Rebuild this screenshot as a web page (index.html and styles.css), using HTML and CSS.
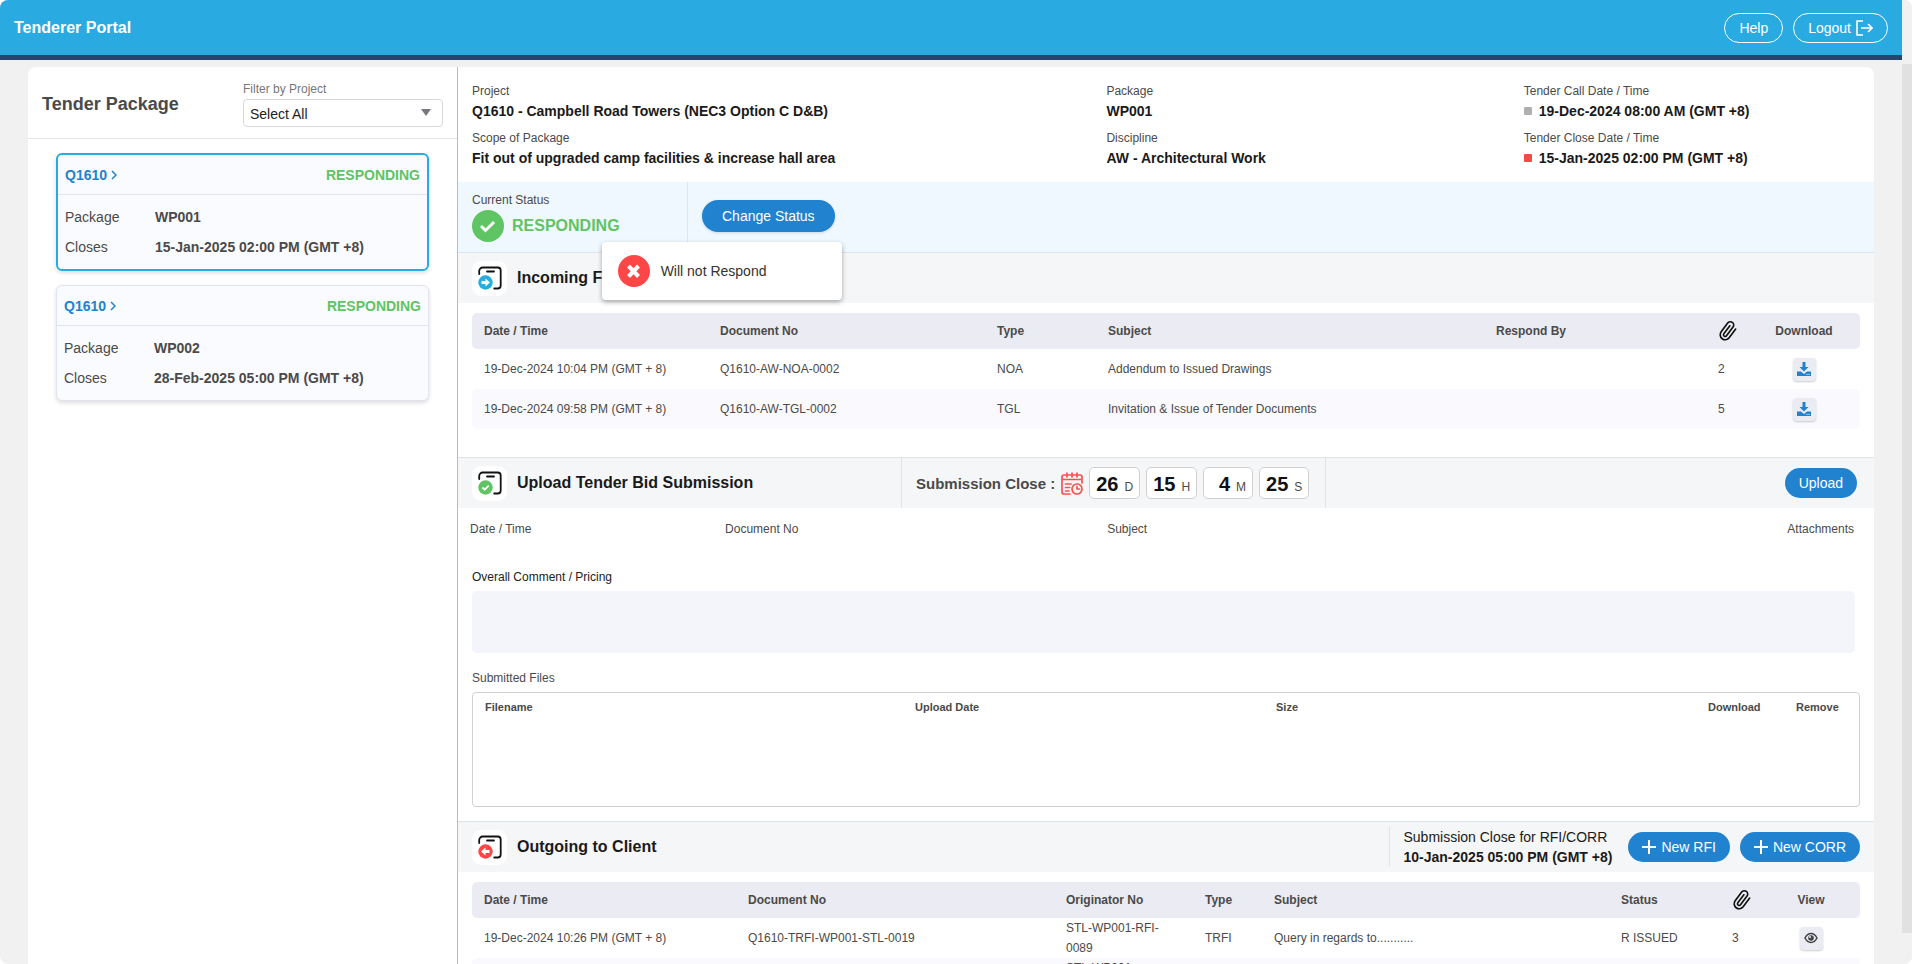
FILE: index.html
```html
<!DOCTYPE html>
<html lang="en">
<head>
<meta charset="utf-8">
<title>Tenderer Portal</title>
<link rel="stylesheet" href="styles.css">
</head>
<body>
<svg class="defs" aria-hidden="true">
  <symbol id="clip" viewBox="0 0 24 24"><path d="M21.440 11.050l-9.190 9.190a6 6 0 0 1-8.490-8.490l9.190-9.190a4 4 0 0 1 5.660 5.660l-9.200 9.190a2 2 0 0 1-2.830-2.830l8.490-8.480" fill="none" stroke="#111" stroke-width="2" stroke-linecap="round" transform="rotate(-8 12 12)"/></symbol>
  <symbol id="download" viewBox="0 0 14 14"><path d="M5.500 0h3v5h3L7 9.500 2.500 5h3zM0 9.500h4L7 12l3-2.500h4V14H0z" fill="#2182cf"/><path d="M9.500 12.500h1m1 0h1" stroke="#fff" stroke-width="1"/></symbol>
  <symbol id="chevron" viewBox="0 0 6 10"><path d="M1 1l4 4-4 4" fill="none" stroke="#2182cf" stroke-width="1.500"/></symbol>
  <symbol id="plus" viewBox="0 0 14 14"><path d="M7 0v14M0 7h14" stroke="#fff" stroke-width="2"/></symbol>
  <symbol id="sheet" viewBox="0 0 24 24"><path d="M1.200 8V5a3.500 3.500 0 0 1 3.500-3.500h15A3 3 0 0 1 22.700 4.500v15a3 3 0 0 1-3 3h-3.500M9 5.500h7" fill="none" stroke="#111" stroke-width="1.800" stroke-linecap="round"/></symbol>
  <symbol id="eye" viewBox="0 0 14 12"><path d="M1 6c3-6 9-6 12 0-3 6-9 6-12 0z" fill="none" stroke="#444" stroke-width="1.500"/><circle cx="7" cy="6" r="2.800" fill="#444"/><circle cx="6" cy="5" r="1" fill="#eaebf3"/></symbol>
</svg>
<div class="page">
  <div class="app">
    <header class="topbar">
      <h1 class="brand">Tenderer Portal</h1>
      <nav class="topnav">
        <button class="outline">Help</button>
        <button class="outline">Logout
          <svg width="17" height="16" viewBox="0 0 17 16"><path d="M7 1H1v14h6M5 8h10M12 4l4 4-4 4" fill="none" stroke="#fff" stroke-width="1.600"/></svg>
        </button>
      </nav>
    </header>
    <div class="workspace">
      <aside class="sidebar">
        <div class="side-head">
          <h2 class="side-title">Tender Package</h2>
          <div class="filter">
            <label for="project">Filter by Project</label>
            <select id="project"><option>Select All</option></select>
          </div>
        </div>
        <div class="packages">
          <article class="package selected">
            <div class="package-head"><a href="#">Q1610 <svg width="6" height="10"><use href="#chevron"/></svg></a><strong>RESPONDING</strong></div>
            <dl><dt>Package</dt><dd>WP001</dd><dt>Closes</dt><dd>15-Jan-2025 02:00 PM (GMT +8)</dd></dl>
          </article>
          <article class="package">
            <div class="package-head"><a href="#">Q1610 <svg width="6" height="10"><use href="#chevron"/></svg></a><strong>RESPONDING</strong></div>
            <dl><dt>Package</dt><dd>WP002</dd><dt>Closes</dt><dd>28-Feb-2025 05:00 PM (GMT +8)</dd></dl>
          </article>
        </div>
      </aside>
      <main class="content">
        <dl class="summary">
          <div><dt>Project</dt><dd>Q1610 - Campbell Road Towers (NEC3 Option C D&amp;B)</dd></div>
          <div><dt>Package</dt><dd>WP001</dd></div>
          <div><dt>Tender Call Date / Time</dt><dd><i class="dot"></i>19-Dec-2024 08:00 AM (GMT +8)</dd></div>
          <div><dt>Scope of Package</dt><dd>Fit out of upgraded camp facilities &amp; increase hall area</dd></div>
          <div><dt>Discipline</dt><dd>AW - Architectural Work</dd></div>
          <div><dt>Tender Close Date / Time</dt><dd><i class="dot red"></i>15-Jan-2025 02:00 PM (GMT +8)</dd></div>
        </dl>
        <section class="status">
          <div class="current">
            <span class="small">Current Status</span>
            <span class="state"><svg width="32" height="32" viewBox="0 0 32 32"><circle cx="16" cy="16" r="16" fill="#5fc463"/><path d="M9 16l4.500 4.500L22 12" fill="none" stroke="#fff" stroke-width="3"/></svg>RESPONDING</span>
          </div>
          <div class="change">
            <button class="primary tall">Change Status</button>
            <button class="menu"><svg width="32" height="32" viewBox="0 0 32 32"><circle cx="16" cy="16" r="16" fill="#ff4646"/><path d="M10.500 11l10 10.500m0-10.500l-10 10.500" stroke="#fff" stroke-width="4"/></svg>Will not Respond</button>
          </div>
        </section>

        <section class="incoming">
          <div class="section-head">
            <span class="tile"><svg width="24" height="24" viewBox="0 0 24 24"><use href="#sheet"/><circle cx="7.500" cy="16.500" r="7.200" fill="#29abe2"/><path d="M3.500 15h4v-2.500l4.500 4-4.500 4V18h-4z" fill="#fff"/></svg></span>
            <h2>Incoming From Client</h2>
          </div>
          <table class="list">
            <colgroup><col class="w-in-date"><col class="w-in-doc"><col class="w-in-type"><col><col class="w-in-respond"><col class="w-clip"><col class="w-in-act"></colgroup>
            <thead><tr><th>Date / Time</th><th>Document No</th><th>Type</th><th>Subject</th><th>Respond By</th><th><svg class="clip" width="20" height="22" role="img" aria-label="Attachments"><use href="#clip"/></svg></th><th class="mid">Download</th></tr></thead>
            <tbody>
              <tr><td>19-Dec-2024 10:04 PM (GMT + 8)</td><td>Q1610-AW-NOA-0002</td><td>NOA</td><td>Addendum to Issued Drawings</td><td></td><td>2</td><td class="mid"><button class="icon" aria-label="Download"><svg width="14" height="14"><use href="#download"/></svg></button></td></tr>
              <tr><td>19-Dec-2024 09:58 PM (GMT + 8)</td><td>Q1610-AW-TGL-0002</td><td>TGL</td><td>Invitation &amp; Issue of Tender Documents</td><td></td><td>5</td><td class="mid"><button class="icon" aria-label="Download"><svg width="14" height="14"><use href="#download"/></svg></button></td></tr>
            </tbody>
          </table>
        </section>

        <section class="upload">
          <div class="section-head ruled">
            <div class="upload-title">
              <span class="tile"><svg width="24" height="24" viewBox="0 0 24 24"><use href="#sheet"/><circle cx="7.500" cy="16.500" r="7.200" fill="#5fc463"/><path d="M4.500 16.500l2.200 2.200 4-4" fill="none" stroke="#fff" stroke-width="1.800"/></svg></span>
              <h2>Upload Tender Bid Submission</h2>
            </div>
            <div class="countdown">
              <strong>Submission Close :</strong>
              <svg width="22" height="23" viewBox="0 0 22 23" fill="none" stroke="#ff4f4f" stroke-width="1.700" stroke-linecap="round"><path d="M9 22H3a2 2 0 0 1-2-2V5a2 2 0 0 1 2-2h16a2 2 0 0 1 2 2v6M1 7.500h20M6 1v4M11 1v4M16 1v4M4.500 12H10M4.500 15.500H8.500M4.500 19H8"/><circle cx="16" cy="17" r="5"/><path d="M16 14.500V17h2.500"/></svg>
              <span class="unit"><b>26</b>D</span><span class="unit"><b>15</b>H</span><span class="unit"><b>4</b>M</span><span class="unit"><b>25</b>S</span>
            </div>
            <button class="primary push">Upload</button>
          </div>
          <div class="bid-head"><span>Date / Time</span><span>Document No</span><span>Subject</span><span>Attachments</span></div>
          <div class="bid-body">
            <label class="dark" for="comment">Overall Comment / Pricing</label>
            <textarea id="comment" readonly></textarea>
            <p>Submitted Files</p>
            <div class="files">
              <table>
                <colgroup><col class="w-f-name"><col class="w-f-date"><col><col class="w-f-down"><col class="w-f-rem"></colgroup>
                <thead><tr><th>Filename</th><th>Upload Date</th><th>Size</th><th>Download</th><th>Remove</th></tr></thead>
              </table>
            </div>
          </div>
        </section>

        <section class="outgoing">
          <div class="section-head ruled">
            <span class="tile"><svg width="24" height="24" viewBox="0 0 24 24"><use href="#sheet"/><circle cx="7.500" cy="16.500" r="7.200" fill="#ff4646"/><path d="M11.500 15h-4v-2.500l-4.500 4 4.500 4V18h4z" fill="#fff"/></svg></span>
            <h2>Outgoing to Client</h2>
            <div class="deadline push"><span>Submission Close for RFI/CORR</span><strong>10-Jan-2025 05:00 PM (GMT +8)</strong></div>
            <div class="actions">
              <button class="primary"><svg width="14" height="14"><use href="#plus"/></svg>New RFI</button>
              <button class="primary"><svg width="14" height="14"><use href="#plus"/></svg>New CORR</button>
            </div>
          </div>
          <table class="list">
            <colgroup><col class="w-out-date"><col class="w-out-doc"><col class="w-out-orig"><col class="w-out-type"><col><col class="w-out-status"><col class="w-clip"><col class="w-out-act"></colgroup>
            <thead><tr><th>Date / Time</th><th>Document No</th><th>Originator No</th><th>Type</th><th>Subject</th><th>Status</th><th><svg class="clip" width="20" height="22" role="img" aria-label="Attachments"><use href="#clip"/></svg></th><th class="mid">View</th></tr></thead>
            <tbody>
              <tr><td>19-Dec-2024 10:26 PM (GMT + 8)</td><td>Q1610-TRFI-WP001-STL-0019</td><td>STL-WP001-RFI-<br>0089</td><td>TRFI</td><td>Query in regards to...........</td><td>R ISSUED</td><td>3</td><td class="mid"><button class="icon" aria-label="View"><svg width="14" height="12"><use href="#eye"/></svg></button></td></tr>
              <tr><td></td><td></td><td>STL-WP001-<br>&nbsp;</td><td></td><td></td><td></td><td></td><td></td></tr>
            </tbody>
          </table>
        </section>
      </main>
    </div>
  </div>
  <div class="scroll-track"><div class="scroll-thumb"></div></div>
</div>
</body>
</html>
```
FILE: styles.css
```css
* { box-sizing: border-box; }
body {
  margin: 0;
  background: #fff;
  color: #4a4a4a;
  font: 12px/20px "Liberation Sans", Arial, sans-serif;
}
h1, h2, p, dl, dd { margin: 0; }
button, select, textarea { font: inherit; }
button { cursor: pointer; }
svg { flex: none; }
.defs { display: none; }

.page { display: flex; height: 100vh; overflow: hidden; background: #f1f1f1; border-radius: 8px; }
.app { flex: 1; min-width: 0; display: flex; flex-direction: column; }
.scroll-track { width: 10px; padding: 64px 0 31px; background: #f1f1f1; }
.scroll-thumb { height: 100%; background: #e1e1e1; }

.topbar {
  display: flex;
  flex: none;
  align-items: center;
  justify-content: space-between;
  height: 60px;
  padding: 0 14px;
  background: #29abe2;
  border-bottom: 5px solid #29446a;
}
.brand { padding-top: 1px; color: #fff; font-size: 16px; }
.topnav { display: flex; gap: 10px; }
.outline {
  display: flex;
  align-items: center;
  gap: 5px;
  height: 30px;
  padding: 0 14px;
  color: #fff;
  font-size: 14px;
  background: none;
  border: 1px solid #fff;
  border-radius: 15px;
}

.workspace {
  display: flex;
  flex: 1;
  min-height: 0;
  margin: 7px 28px 0;
  background: #fff;
  border-radius: 8px 8px 0 0;
}
.sidebar { width: 430px; flex: none; border-right: 1px solid #bbb; }
.side-head {
  display: flex;
  align-items: center;
  justify-content: space-between;
  height: 72px;
  padding: 0 14px;
  border-bottom: 1px solid #e1e4ea;
}
.side-title { padding-top: 2px; font-size: 18px; }
.filter { display: flex; flex-direction: column; width: 200px; color: #777; }
.filter select {
  height: 28px;
  padding: 2px 6px 0;
  color: #222;
  font-size: 14px;
  appearance: none;
  background: #fff url("data:image/svg+xml,%3Csvg xmlns='http://www.w3.org/2000/svg' width='10' height='7'%3E%3Cpath d='M0 0h10L5 7z' fill='%2377777f'/%3E%3C/svg%3E") no-repeat right 11px center;
  border: 1px solid #d8d8d8;
  border-radius: 4px;
}
.packages { display: flex; flex-direction: column; gap: 14px; padding: 14px 28px; }
.package {
  font-size: 14px;
  background: #fafbfe;
  border: 1px solid #e1e4ef;
  border-radius: 6px;
  box-shadow: 0 2px 4px #0002;
}
.package.selected { border: 2px solid #29abe2; }
.package-head {
  display: flex;
  align-items: center;
  justify-content: space-between;
  height: 40px;
  padding: 0 7px;
  border-bottom: 1px solid #e1e4ea;
}
.package-head a { color: #2182cf; font-weight: bold; text-decoration: none; }
.package-head strong { color: #5fc463; }
.package dl {
  display: grid;
  grid-template-columns: 90px 1fr;
  padding: 7px;
  line-height: 30px;
}
.package dd { font-weight: bold; }

.content { flex: 1; min-width: 0; overflow: hidden; }
.summary {
  display: grid;
  grid-template-columns: 634fr 417fr 350fr;
  row-gap: 7px;
  padding: 14px 0 14px 14px;
}
.summary dd { display: flex; align-items: center; color: #1a1a1a; font-size: 14px; font-weight: bold; }
.dot { width: 8px; height: 8px; margin-right: 7px; background: #b0b0b0; border-radius: 1px; }
.dot.red { background: #ff4646; }

.status { display: flex; background: #eff7ff; border-bottom: 1px solid #dde5ee; }
.current {
  display: flex;
  flex-direction: column;
  width: 230px;
  height: 70px;
  padding: 8px 14px;
  border-right: 1px solid #dde5ee;
}
.state { display: flex; align-items: center; gap: 8px; color: #5fc463; font-size: 16px; font-weight: bold; }
.change { position: relative; padding: 18px 14px; }
.primary {
  display: flex;
  align-items: center;
  gap: 5px;
  height: 30px;
  padding: 0 14px;
  color: #fff;
  font-size: 14px;
  background: #2182cf;
  border: 0;
  border-radius: 16px;
}
.primary.tall { height: 32px; padding: 0 20px; box-shadow: 0 1px 3px #0002; }
.menu {
  position: absolute;
  top: 60px;
  right: 7px;
  z-index: 2;
  display: flex;
  align-items: center;
  gap: 11px;
  width: 240px;
  height: 58px;
  padding: 0 16px;
  color: #333;
  font-size: 14px;
  background: #fff;
  border: 0;
  border-radius: 4px;
  box-shadow: 0 2px 5px #0005;
}

.section-head {
  display: flex;
  align-items: center;
  height: 50px;
  padding: 0 14px;
  background: #f5f6f8;
}
.section-head.ruled { height: 51px; border-top: 1px solid #dfe2e8; }
.section-head h2 { color: #1a1a1a; font-size: 16px; }
.tile {
  display: grid;
  place-items: center;
  flex: none;
  width: 35px;
  height: 35px;
  margin-right: 10px;
  background: #fff;
  border-radius: 9px;
}
.push { margin-left: auto; }

table { width: 100%; table-layout: fixed; border-collapse: collapse; }
th, td { padding: 0; font-size: 12px; text-align: left; }
.list { width: calc(100% - 28px); margin: 10px 14px 0; }
.list thead tr { height: 36px; background: #eaebf3; }
.list tbody tr { height: 40px; }
.list tbody tr:nth-child(even) { background: #f9f9fe; }
.list th:first-child, .list td:first-child { padding-left: 12px; }
.list thead { clip-path: inset(0 round 5px); }
.list tbody tr { clip-path: inset(0 round 5px); }
.list .mid { text-align: center; }
.clip { display: block; }
.icon {
  display: inline-grid;
  place-items: center;
  width: 23px;
  height: 23px;
  padding: 0;
  vertical-align: middle;
  background: #eaebf3;
  border: 0;
  border-radius: 4px;
  box-shadow: 0 1px 2px #0003;
}
.w-clip { width: 30px; }
.w-in-date { width: 248px; }
.w-in-doc { width: 277px; }
.w-in-type { width: 111px; }
.w-in-respond { width: 222px; }
.w-in-act { width: 112px; }
.w-out-date { width: 276px; }
.w-out-doc { width: 318px; }
.w-out-orig { width: 139px; }
.w-out-type { width: 69px; }
.w-out-status { width: 111px; }
.w-out-act { width: 98px; }

.incoming { padding-bottom: 28px; }
.upload .section-head { align-items: stretch; }
.upload-title { display: flex; align-items: center; width: 429px; }
.upload .push { align-self: center; margin-right: 3px; }
.countdown {
  display: flex;
  align-items: center;
  gap: 6px;
  padding: 0 16px 0 14px;
  border: solid #dfe2e8;
  border-width: 0 1px;
}
.countdown strong { padding-top: 2px; font-size: 15px; }
.unit {
  display: flex;
  align-items: baseline;
  justify-content: flex-end;
  gap: 6px;
  min-width: 50px;
  height: 32px;
  padding: 6px 6px 0;
  background: #fff;
  border: 1px solid #d0d0d0;
  border-radius: 5px;
}
.unit b { color: #111; font-size: 20px; }
.bid-head {
  display: grid;
  grid-template-columns: 255fr 382fr 680fr 66fr;
  padding: 11px 20px 0 12px;
}
.bid-body { display: flex; flex-direction: column; padding: 28px 14px 14px; }
.dark { color: #222; }
textarea {
  height: 62px;
  margin: 4px 5px 15px 0;
  background: #f4f5fa;
  border: 0;
  border-radius: 5px;
  resize: none;
}
.files { height: 115px; margin-top: 4px; padding: 4px 12px; border: 1px solid #d0d0d0; border-radius: 4px; }
.files th { font-size: 11px; }
.w-f-name { width: 430px; }
.w-f-date { width: 361px; }
.w-f-down { width: 88px; }
.w-f-rem { width: 51px; }

.deadline {
  display: flex;
  flex-direction: column;
  padding: 0 16px 0 14px;
  color: #1a1a1a;
  font-size: 14px;
  border-left: 1px solid #dfe2e8;
}
.actions { display: flex; gap: 10px; }
```
